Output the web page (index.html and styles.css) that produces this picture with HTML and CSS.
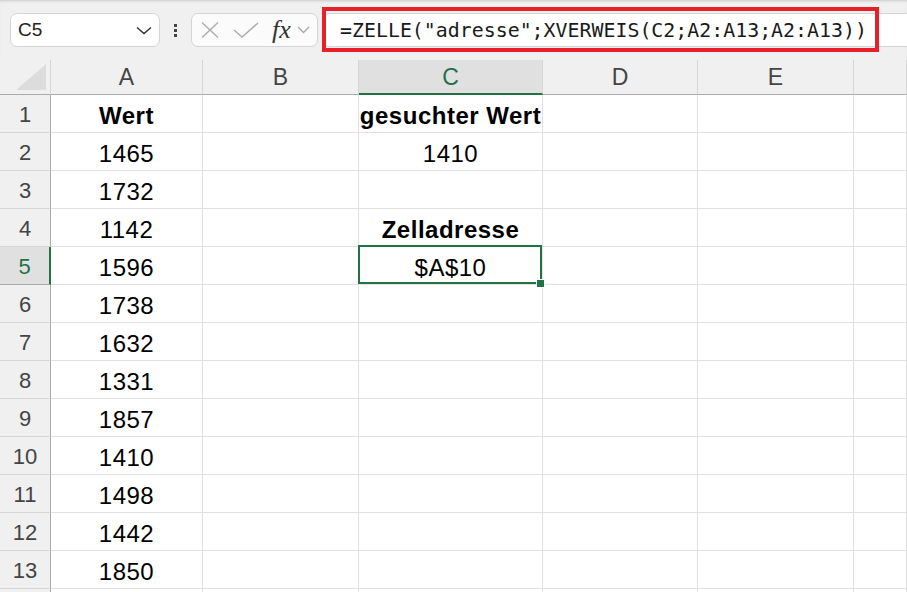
FILE: index.html
```html
<!DOCTYPE html>
<html lang="de">
<head>
  <meta charset="UTF-8">
  <meta name="viewport" content="width=device-width, initial-scale=1.0">
  <title>ZELLE mit XVERWEIS</title>
  <link rel="stylesheet" href="styles.css">
</head>
<body>

  <div class="toolbar">
    <div class="name-box">
      <span>C5</span>
      <svg width="16" height="9" viewBox="0 0 16 9"><path d="M1 1.5 L8 7.5 L15 1.5" fill="none" stroke="#333" stroke-width="1.5"/></svg>
    </div>
    <div class="kebab"><i></i><i></i><i></i></div>
    <div class="fx-box">
      <svg width="18" height="16" viewBox="0 0 18 16"><path d="M1 0.5 L17 15.5 M17 0.5 L1 15.5" stroke="#acacac" stroke-width="1.4"/></svg>
      <svg width="26" height="16" viewBox="0 0 26 16"><path d="M1 8 L9 15 L25 1" fill="none" stroke="#acacac" stroke-width="1.4"/></svg>
      <span class="fx">fx</span>
      <svg width="13" height="8" viewBox="0 0 13 8"><path d="M1 1 L6.5 6.5 L12 1" fill="none" stroke="#a6a6a6" stroke-width="1.3"/></svg>
    </div>
    <div class="formula">
      <div class="highlight"></div>
      <span class="formula-text">=ZELLE("adresse";XVERWEIS(C2;A2:A13;A2:A13))</span>
    </div>
  </div>

  <div class="sheet">
    <div class="corner"></div>
    <div class="col-head">A</div>
    <div class="col-head">B</div>
    <div class="col-head selected">C</div>
    <div class="col-head">D</div>
    <div class="col-head">E</div>
    <div class="col-head"></div>

    <div class="row-head">1</div>
    <div class="cell bold">Wert</div><div class="cell"></div><div class="cell bold">gesuchter Wert</div><div class="cell"></div><div class="cell"></div><div class="cell"></div>

    <div class="row-head">2</div>
    <div class="cell">1465</div><div class="cell"></div><div class="cell">1410</div><div class="cell"></div><div class="cell"></div><div class="cell"></div>

    <div class="row-head">3</div>
    <div class="cell">1732</div><div class="cell"></div><div class="cell"></div><div class="cell"></div><div class="cell"></div><div class="cell"></div>

    <div class="row-head">4</div>
    <div class="cell">1142</div><div class="cell"></div><div class="cell bold">Zelladresse</div><div class="cell"></div><div class="cell"></div><div class="cell"></div>

    <div class="row-head selected">5</div>
    <div class="cell">1596</div><div class="cell"></div><div class="cell active">$A$10<span class="handle"></span></div><div class="cell"></div><div class="cell"></div><div class="cell"></div>

    <div class="row-head">6</div>
    <div class="cell">1738</div><div class="cell"></div><div class="cell"></div><div class="cell"></div><div class="cell"></div><div class="cell"></div>

    <div class="row-head">7</div>
    <div class="cell">1632</div><div class="cell"></div><div class="cell"></div><div class="cell"></div><div class="cell"></div><div class="cell"></div>

    <div class="row-head">8</div>
    <div class="cell">1331</div><div class="cell"></div><div class="cell"></div><div class="cell"></div><div class="cell"></div><div class="cell"></div>

    <div class="row-head">9</div>
    <div class="cell">1857</div><div class="cell"></div><div class="cell"></div><div class="cell"></div><div class="cell"></div><div class="cell"></div>

    <div class="row-head">10</div>
    <div class="cell">1410</div><div class="cell"></div><div class="cell"></div><div class="cell"></div><div class="cell"></div><div class="cell"></div>

    <div class="row-head">11</div>
    <div class="cell">1498</div><div class="cell"></div><div class="cell"></div><div class="cell"></div><div class="cell"></div><div class="cell"></div>

    <div class="row-head">12</div>
    <div class="cell">1442</div><div class="cell"></div><div class="cell"></div><div class="cell"></div><div class="cell"></div><div class="cell"></div>

    <div class="row-head">13</div>
    <div class="cell">1850</div><div class="cell"></div><div class="cell"></div><div class="cell"></div><div class="cell"></div><div class="cell"></div>

    <div class="row-head"></div>
    <div class="cell"></div><div class="cell"></div><div class="cell"></div><div class="cell"></div><div class="cell"></div><div class="cell"></div>
  </div>

</body>
</html>
```

FILE: styles.css
```css
* {
  margin: 0;
  padding: 0;
  box-sizing: border-box;
}

body {
  font-family: "Liberation Sans", Arial, sans-serif;
  background-color: #f0f0f0;
  overflow: hidden;
  height: 100vh;
}

/* formula bar */
.toolbar {
  height: 60px;
  display: flex;
  align-items: flex-start;
  padding: 13px 0 0 10px;
  box-shadow: inset 0 3px 3px -2px #c8c8c8;
}

.name-box {
  width: 150px;
  height: 34px;
  background-color: white;
  border: 1px solid #d4d4d4;
  border-radius: 7px;
  display: flex;
  align-items: center;
  justify-content: space-between;
  padding: 0 7px 0 7px;
  font-size: 19px;
  color: #222;
}

.kebab {
  width: 31px;
  height: 34px;
  display: flex;
  flex-direction: column;
  align-items: center;
  justify-content: center;
  gap: 2px;
}

.kebab i {
  width: 3px;
  height: 3px;
  background-color: #444;
}

.fx-box {
  width: 127px;
  height: 34px;
  background-color: #fbfbfb;
  border: 1px solid #d4d4d4;
  border-radius: 7px;
  display: flex;
  align-items: center;
  padding-left: 9px;
}

.fx-box svg:nth-child(2) {
  margin-left: 14px;
}

.fx {
  font-family: "Liberation Serif", serif;
  font-style: italic;
  font-size: 26px;
  color: #333;
  margin-left: 13px;
  margin-right: 6px;
  line-height: 1;
}

.formula {
  position: relative;
  flex-grow: 1;
  height: 34px;
  margin-left: 4px;
  background-color: white;
  border: 1px solid #d4d4d4;
  border-right: none;
  border-radius: 7px 0 0 7px;
  display: flex;
  align-items: center;
  padding-left: 17px;
}

.formula-text {
  font-family: "DejaVu Sans Mono", monospace;
  font-size: 19.9px;
  color: #1a1a1a;
  white-space: nowrap;
}

.highlight {
  position: absolute;
  left: -1px;
  top: -7px;
  width: 557px;
  height: 45px;
  border: 4px solid #e8202a;
}

/* grid */
.sheet {
  display: grid;
  grid-template-columns: 51px 152px 156px 184px 155px 156px 1fr;
  grid-template-rows: 35px;
  grid-auto-rows: 38px;
  background-color: white;
}

.corner {
  background-color: #f0f0f0;
  border-right: 1px solid #d6d6d6;
  border-bottom: 1px solid #ababab;
  position: relative;
}

.corner::after {
  content: "";
  position: absolute;
  right: 4px;
  bottom: 4px;
  border-style: solid;
  border-width: 0 0 26px 30px;
  border-color: transparent transparent #dcdcdc transparent;
}

.col-head {
  background-color: #f0f0f0;
  border-right: 1px solid #d6d6d6;
  border-bottom: 1px solid #ababab;
  display: flex;
  align-items: center;
  justify-content: center;
  font-size: 23px;
  color: #444;
  padding-top: 1px;
}

.col-head.selected {
  background-color: #e0e0e0;
  color: #217346;
  border-bottom: 2px solid #217346;
}

.row-head {
  background-color: #f0f0f0;
  border-right: 1px solid #ababab;
  border-bottom: 1px solid #d6d6d6;
  display: flex;
  align-items: center;
  justify-content: center;
  font-size: 22px;
  color: #444;
  padding-top: 3px;
}

.row-head.selected {
  background-color: #e0e0e0;
  color: #217346;
  border-right: 2px solid #217346;
  border-bottom-color: #ababab;
}

.cell {
  border-right: 1px solid #e1e1e1;
  border-bottom: 1px solid #e1e1e1;
  display: flex;
  align-items: flex-end;
  justify-content: center;
  font-size: 24px;
  line-height: 24px;
  letter-spacing: 0.5px;
  padding-bottom: 4px;
  color: #000;
  white-space: nowrap;
}

.cell.bold {
  font-weight: bold;
}

.cell.active {
  position: relative;
}

.cell.active::after {
  content: "";
  position: absolute;
  left: -1px;
  top: -2px;
  right: 0;
  bottom: 0;
  border: 2px solid #217346;
}

.handle {
  position: absolute;
  right: -2px;
  bottom: -3px;
  width: 7px;
  height: 7px;
  background-color: #217346;
  box-shadow: 0 0 0 1px white;
  z-index: 1;
}
```
